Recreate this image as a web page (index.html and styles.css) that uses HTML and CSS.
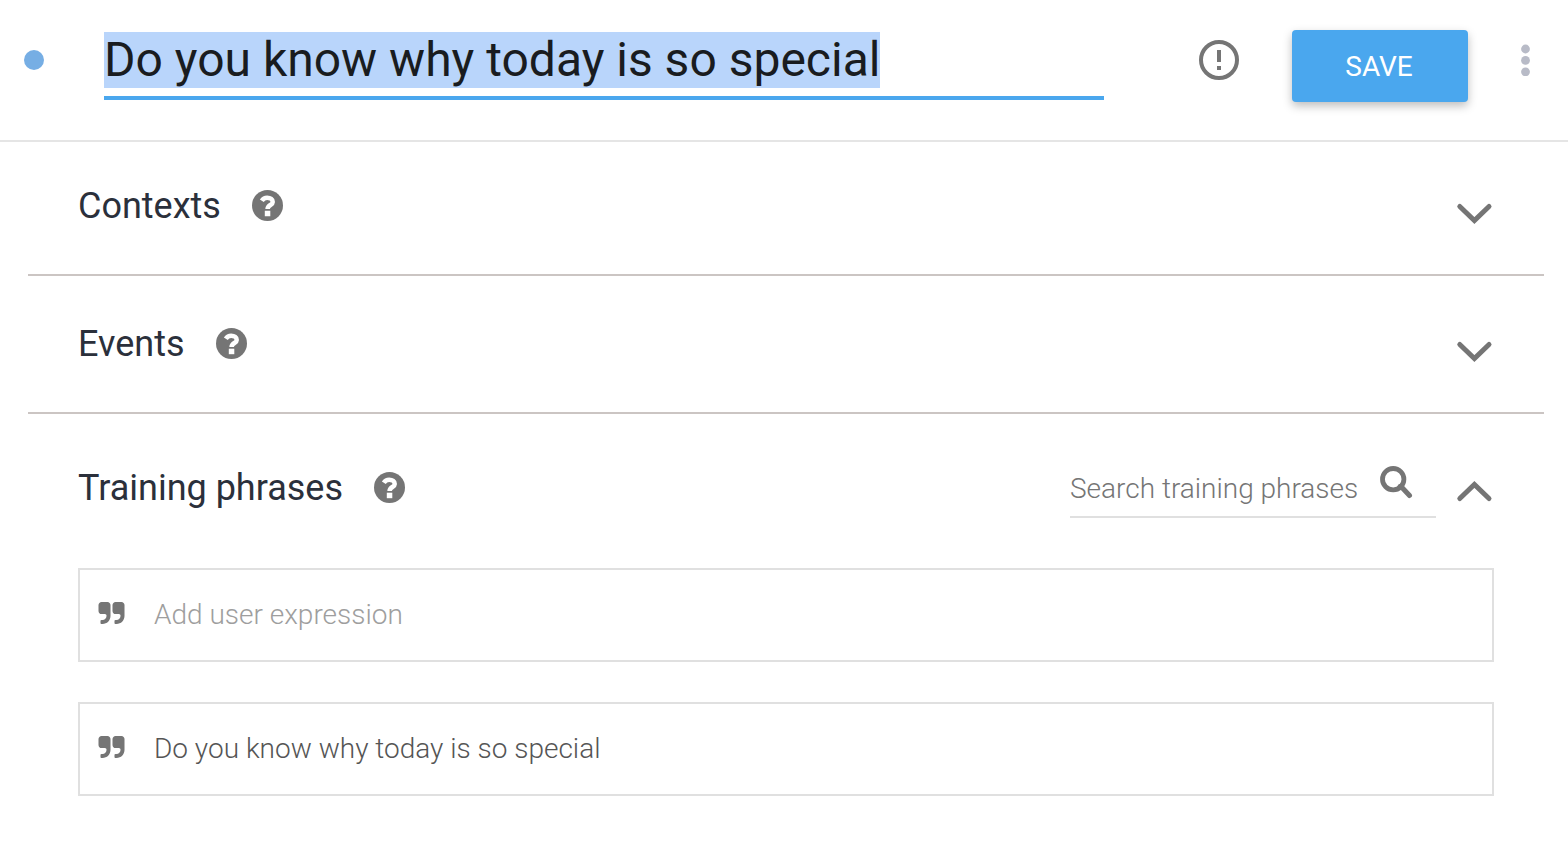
FILE: index.html
```html
<!DOCTYPE html>
<html lang="en">
<head>
<meta charset="utf-8">
<title>Intent</title>
<meta name="viewport" content="width=device-width, initial-scale=1">
<link rel="stylesheet" href="styles.css">
</head>
<body>
<svg class="sprite" aria-hidden="true">
  <symbol id="help" viewBox="0 0 31 31"><circle cx="15.500" cy="15.500" r="15.500"/><path d="M9.800 10.800C11.200 8.600 13 7.800 15.200 7.800 18.400 7.800 20.700 9.300 20.700 11.900 20.700 15.200 15.700 14.900 15.600 19" fill="none" stroke="#fff" stroke-width="4.600"/><path d="M12.800 20.700h5.500v5.500h-5.500z" fill="#fff"/></symbol>
  <symbol id="quote" viewBox="64 128 1664 1408"><path d="M832 320v704q0 104-40.500 198.500t-109.500 163.500-163.500 109.500-198.500 40.500h-64q-26 0-45-19t-19-45v-128q0-26 19-45t45-19h64q106 0 181-75t75-181v-32q0-40-28-68t-68-28h-224q-80 0-136-56t-56-136v-384q0-80 56-136t136-56h384q80 0 136 56t56 136zM1728 320v704q0 104-40.500 198.500t-109.500 163.500-163.500 109.500-198.500 40.500h-64q-26 0-45-19t-19-45v-128q0-26 19-45t45-19h64q106 0 181-75t75-181v-32q0-40-28-68t-68-28h-224q-80 0-136-56t-56-136v-384q0-80 56-136t136-56h384q80 0 136 56t56 136z"/></symbol>
</svg>

<header class="topbar">
  <span class="status"></span>
  <input class="intent-name" id="intent-name" type="text" aria-label="Intent name" value="Do you know why today is so special" spellcheck="false" autofocus>
  <button class="icon-button alert" type="button" aria-label="Validation">
    <svg width="40" height="40" viewBox="0 0 40 40"><circle cx="20" cy="20" r="18" fill="none" stroke="currentColor" stroke-width="4"/><path d="M18 10h4v12h-4zM18 26h4v4h-4z"/></svg>
  </button>
  <button class="save" type="button">SAVE</button>
  <button class="icon-button more" type="button" aria-label="More options">
    <svg width="10" height="32" viewBox="0 0 10 32"><circle cx="5.500" cy="5" r="4.400"/><circle cx="5.500" cy="16.400" r="4.400"/><circle cx="5.500" cy="27.800" r="4.400"/></svg>
  </button>
</header>

<main class="content">
  <section class="panel">
    <div class="panel-head">
      <h2>Contexts</h2>
      <button class="icon-button help" type="button" aria-label="About contexts"><svg width="31" height="31"><use href="#help"/></svg></button>
      <button class="icon-button toggle" type="button" aria-label="Expand contexts" aria-expanded="false"><svg width="38" height="42" viewBox="0 0 38 42"><path d="M3.800 21.500 18.400 35.500 33 21.500"/></svg></button>
    </div>
  </section>
  <section class="panel">
    <div class="panel-head">
      <h2>Events</h2>
      <button class="icon-button help" type="button" aria-label="About events"><svg width="31" height="31"><use href="#help"/></svg></button>
      <button class="icon-button toggle" type="button" aria-label="Expand events" aria-expanded="false"><svg width="38" height="42" viewBox="0 0 38 42"><path d="M3.800 21.500 18.400 35.500 33 21.500"/></svg></button>
    </div>
  </section>
  <section class="panel">
    <div class="panel-head">
      <h2>Training phrases</h2>
      <button class="icon-button help" type="button" aria-label="About training phrases"><svg width="31" height="31"><use href="#help"/></svg></button>
      <div class="search">
        <input type="text" aria-label="Search training phrases" placeholder="Search training phrases">
        <button class="icon-button" type="button" aria-label="Search"><svg width="33" height="33" viewBox="0 0 33 33" fill="none" stroke="currentColor"><circle cx="13.200" cy="13.200" r="10.700" stroke-width="4.800"/><path d="m20 20.500 2 1 7.500 8" stroke-width="5" stroke-linecap="round" stroke-linejoin="round"/></svg></button>
      </div>
      <button class="icon-button toggle" type="button" aria-label="Collapse training phrases" aria-expanded="true"><svg width="38" height="42" viewBox="0 0 38 42"><path d="M3.800 31.500 18.400 17.500 33 31.500"/></svg></button>
    </div>
    <div class="phrases">
      <label class="phrase"><svg width="27" height="22"><use href="#quote"/></svg><input type="text" aria-label="User expression" placeholder="Add user expression"></label>
      <label class="phrase"><svg width="27" height="22"><use href="#quote"/></svg><input type="text" aria-label="Training phrase" value="Do you know why today is so special"></label>
    </div>
  </section>
</main>
<script src="main.js"></script>
</body>
</html>
```

FILE: styles.css
```css
* {
  box-sizing: border-box;
}

body {
  margin: 0;
  background: #fff;
  color: #2b303b;
  font-family: Roboto, "Liberation Sans", sans-serif;
}

input,
button {
  margin: 0;
  padding: 0;
  border: 0;
  background: none;
  color: inherit;
  font: inherit;
  outline: 0;
}

input {
  min-width: 0;
}

button {
  cursor: pointer;
}

svg {
  display: block;
  fill: currentColor;
}

svg[fill="none"] {
  fill: none;
}

.sprite {
  position: absolute;
  width: 0;
  height: 0;
}

.icon-button {
  display: flex;
  flex: none;
  align-items: center;
  justify-content: center;
  color: #757575;
}

.topbar {
  display: flex;
  align-items: center;
  padding: 30px 22px 38px 24px;
  border-bottom: 2px solid #e5e5e5;
}

.status {
  flex: none;
  align-self: flex-start;
  width: 20px;
  height: 20px;
  margin: 20px 60px 0 0;
  border-radius: 50%;
  background: #76aee4;
}

.intent-name {
  flex: 1;
  height: 68px;
  padding-bottom: 10px;
  border-bottom: 4px solid #4aa7ee;
  color: #191c20;
  font-size: 48px;
  line-height: 56px;
}

.intent-name::selection {
  background: #b9d5fb;
  color: #191c20;
}

.alert,
.more {
  align-self: flex-start;
  height: 60px;
}

.alert {
  margin: 0 53px 0 95px;
}

.save {
  flex: none;
  width: 176px;
  height: 72px;
  padding-right: 2px;
  border-radius: 4px;
  background: #4aa7ee;
  box-shadow: 0 4px 10px rgba(0, 0, 0, 0.26);
  color: #fff;
  font-size: 28px;
}

.more {
  width: 42px;
  margin-left: 36px;
  color: #b8bbc7;
}

.content {
  padding: 0 24px 0 28px;
}

.panel {
  padding: 47px 50px;
  border-bottom: 2px solid #cbc5c3;
}

.panel:first-child {
  padding-top: 43px;
}

.panel:last-child {
  padding-top: 44px;
  border-bottom: 0;
}

.panel-head {
  display: flex;
  align-items: center;
}

h2 {
  margin: 0;
  font-size: 36px;
  font-weight: 400;
  line-height: 42px;
}

.help {
  margin: 0 0 2px 31px;
}

.toggle {
  margin-left: auto;
}

.toggle path {
  fill: none;
  stroke: currentColor;
  stroke-width: 5px;
  stroke-linecap: round;
}

.search {
  display: flex;
  align-items: flex-start;
  width: 366px;
  height: 60px;
  margin-left: auto;
  padding: 8px 23px 0 0;
  border-bottom: 2px solid #e0e0e0;
  color: #757575;
  font-size: 28px;
  font-weight: 300;
}

.search input {
  flex: 1;
  height: 44px;
}

.search + .toggle {
  margin-left: 20px;
}

.search input::placeholder {
  color: #757575;
  opacity: 1;
}

.phrases {
  display: grid;
  gap: 40px;
  padding-top: 50px;
}

.phrase {
  display: flex;
  align-items: center;
  gap: 29px;
  height: 94px;
  padding: 0 18px;
  border: 2px solid #e0e0e0;
  color: #757575;
}

.phrase svg {
  flex: none;
  margin-bottom: 4px;
}

.phrase input {
  flex: 1;
  height: 90px;
  padding-bottom: 2px;
  color: #555;
  font-size: 28px;
  font-weight: 300;
}

.phrase input::placeholder {
  color: #9e9e9e;
  opacity: 1;
}
```

FILE: main.js
```js
const nameField = document.getElementById("intent-name");
nameField.focus();
nameField.select();
```
